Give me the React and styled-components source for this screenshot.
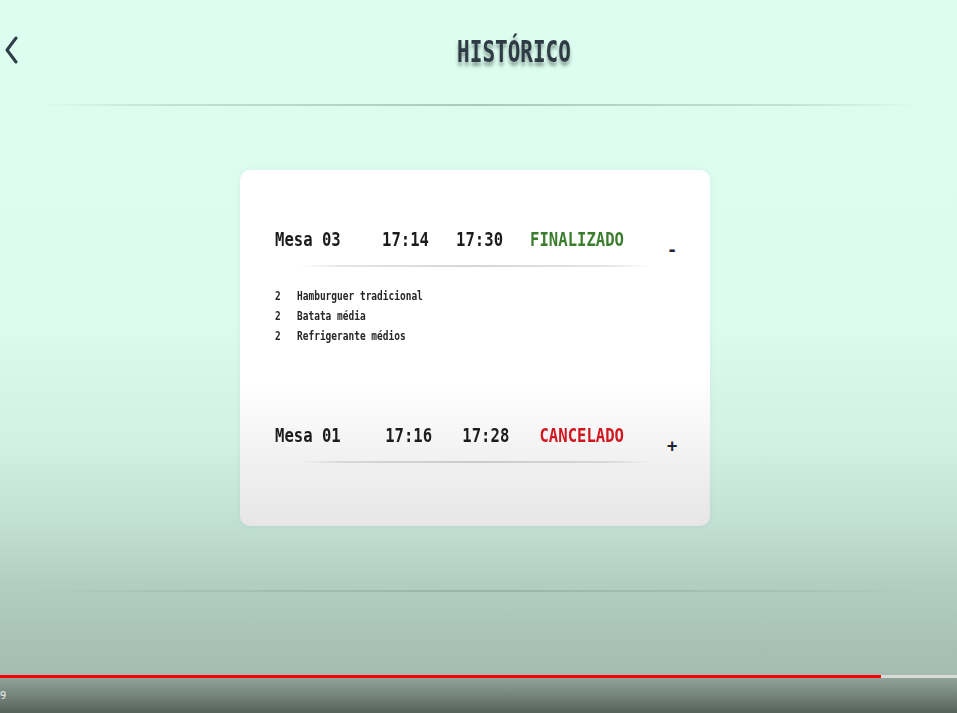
import React, { useState } from 'react';
import styled, { createGlobalStyle } from 'styled-components';

const GlobalStyle = createGlobalStyle`
  * { box-sizing: border-box; }
  html, body { margin: 0; padding: 0; }
  body {
    font-family: 'DejaVu Sans Mono', 'Liberation Mono', monospace;
    background: #dcfdef;
  }
`;

const orders = [
  {
    id: 3,
    mesa: 'Mesa 03',
    start: '17:14',
    end: '17:30',
    status: 'FINALIZADO',
    items: [
      { qty: 2, name: 'Hamburguer tradicional' },
      { qty: 2, name: 'Batata média' },
      { qty: 2, name: 'Refrigerante médios' },
    ],
  },
  {
    id: 1,
    mesa: 'Mesa 01',
    start: '17:16',
    end: '17:28',
    status: 'CANCELADO',
    items: [
      { qty: 1, name: 'Hamburguer tradicional' },
      { qty: 1, name: 'Batata média' },
    ],
  },
];

const App = () => {
  const [open, setOpen] = useState({ 3: true });

  return (
    <Page>
      <GlobalStyle />
      <Header>
        <BackButton aria-label="voltar">
          <svg width="14" height="28" viewBox="0 0 14 28" fill="none">
            <path d="M12 2 L3 14 L12 26" stroke="#2f3d48" strokeWidth="3" strokeLinecap="round" strokeLinejoin="round" />
          </svg>
        </BackButton>
        <Title>
          <span>HISTÓRICO</span>
        </Title>
      </Header>
      <Divider />

      <Card>
        {orders.map(order => (
          <Order key={order.id} $open={!!open[order.id]}>
            <OrderHead>
              <Fields>
                <Field $w="80px">{order.mesa}</Field>
                <Field>{order.start}</Field>
                <Field>{order.end}</Field>
                <Field $status={order.status}>{order.status}</Field>
              </Fields>
              <Toggle onClick={() => setOpen({ ...open, [order.id]: !open[order.id] })}>
                {open[order.id] ? '-' : '+'}
              </Toggle>
            </OrderHead>
            <Underline />
            {open[order.id] && (
              <Items>
                {order.items.map(item => (
                  <Item key={item.name}>
                    <Qty>{item.qty}</Qty>
                    <span>{item.name}</span>
                  </Item>
                ))}
              </Items>
            )}
          </Order>
        ))}
      </Card>

      <Divider $bottom />

      <Player>
        <Progress>
          <Played style={{ width: '92.1%' }} />
        </Progress>
        <Controls>
          <Time>9</Time>
        </Controls>
      </Player>
    </Page>
  );
};

const Page = styled.div`
  width: 957px;
  height: 713px;
  overflow: hidden;
  display: flex;
  flex-direction: column;
  background: linear-gradient(
    to bottom,
    #dcfdef 0%,
    #dbfcee 45%,
    #d2f0e4 62%,
    #c3e0d4 73%,
    #b2cec2 82%,
    #a5bdb2 93%,
    #9fb6ab 100%
  );
`;

const Header = styled.header`
  height: 104px;
  display: flex;
  align-items: flex-start;
  padding-top: 36px;
`;

const BackButton = styled.button`
  border: 0;
  background: none;
  padding: 0 0 0 4px;
  width: 22px;
  height: 28px;
  cursor: pointer;
  display: flex;
  align-items: center;
`;

const Title = styled.h1`
  flex: 1;
  margin: 0;
  padding-left: 49px;
  text-align: center;
  font-size: 21px;
  font-weight: bold;
  line-height: 32px;
  color: #2e3b44;
  text-shadow: 0 3px 3px rgba(40, 50, 50, 0.45);

  span {
    display: inline-block;
    transform: scaleY(1.42);
  }
`;

const Divider = styled.div`
  height: 2px;
  margin: ${p => (p.$bottom ? '64px 40px 0' : '0 40px')};
  background: linear-gradient(
    to right,
    rgba(150, 175, 160, 0) 0%,
    rgba(150, 175, 160, 0.35) 15%,
    rgba(140, 165, 150, 0.6) 50%,
    rgba(150, 175, 160, 0.35) 85%,
    rgba(150, 175, 160, 0) 100%
  );
  filter: blur(0.6px);
`;

const Card = styled.section`
  width: 470px;
  height: 356px;
  margin: 64px 0 0 240px;
  padding: 60px 30px 0 35px;
  border-radius: 10px;
  background: linear-gradient(to bottom, #ffffff 0%, #ffffff 60%, #f5f5f5 75%, #e6e6e6 100%);
  box-shadow: 0 0 6px rgba(0, 0, 0, 0.05);
`;

const Order = styled.div`
  padding-bottom: ${p => (p.$open ? '81px' : '0')};
`;

const OrderHead = styled.div`
  display: flex;
  align-items: flex-start;
  height: 20px;
`;

const Fields = styled.div`
  width: 349px;
  display: flex;
  justify-content: space-between;
`;

const statusColor = {
  FINALIZADO: '#3b7d2d',
  CANCELADO: '#d2161f',
};

const Field = styled.span`
  display: inline-block;
  width: ${p => p.$w || 'auto'};
  font-size: 15.6px;
  font-weight: bold;
  line-height: 20px;
  color: ${p => statusColor[p.$status] || '#1c1c1c'};
  transform: scaleY(1.24);
`;

const Toggle = styled.button`
  margin-left: auto;
  margin-top: 10px;
  margin-right: 0;
  border: 0;
  background: none;
  padding: 0;
  width: 16px;
  font-family: inherit;
  font-size: 17px;
  font-weight: bold;
  line-height: 20px;
  color: #1e2430;
  cursor: pointer;
`;

const Underline = styled.div`
  height: 2px;
  margin: 15px 30px 0 25px;
  background: linear-gradient(
    to right,
    rgba(0, 0, 0, 0) 0%,
    rgba(0, 0, 0, 0.1) 12%,
    rgba(0, 0, 0, 0.16) 50%,
    rgba(0, 0, 0, 0.1) 88%,
    rgba(0, 0, 0, 0) 100%
  );
  filter: blur(0.5px);
`;

const Items = styled.ul`
  list-style: none;
  margin: 18px 0 0;
  padding: 0;
`;

const Item = styled.li`
  display: flex;
  height: 20px;
  align-items: center;
  font-size: 9.5px;
  font-weight: bold;
  color: #262626;

  span {
    display: inline-block;
    transform: scaleY(1.26);
  }
`;

const Qty = styled.span`
  width: 22px;
`;

const Player = styled.div`
  margin-top: auto;
`;

const Progress = styled.div`
  height: 3px;
  background: #d8dbd8;
`;

const Played = styled.div`
  height: 100%;
  background: #ff0000;
`;

const Controls = styled.div`
  height: 35px;
  display: flex;
  align-items: center;
  background: linear-gradient(to bottom, #90a399 0%, #73847b 50%, #56635b 100%);
`;

const Time = styled.span`
  margin-left: 0;
  font-family: 'Roboto', 'Liberation Sans', sans-serif;
  font-size: 11px;
  color: #eef0ee;
`;

export default App;
